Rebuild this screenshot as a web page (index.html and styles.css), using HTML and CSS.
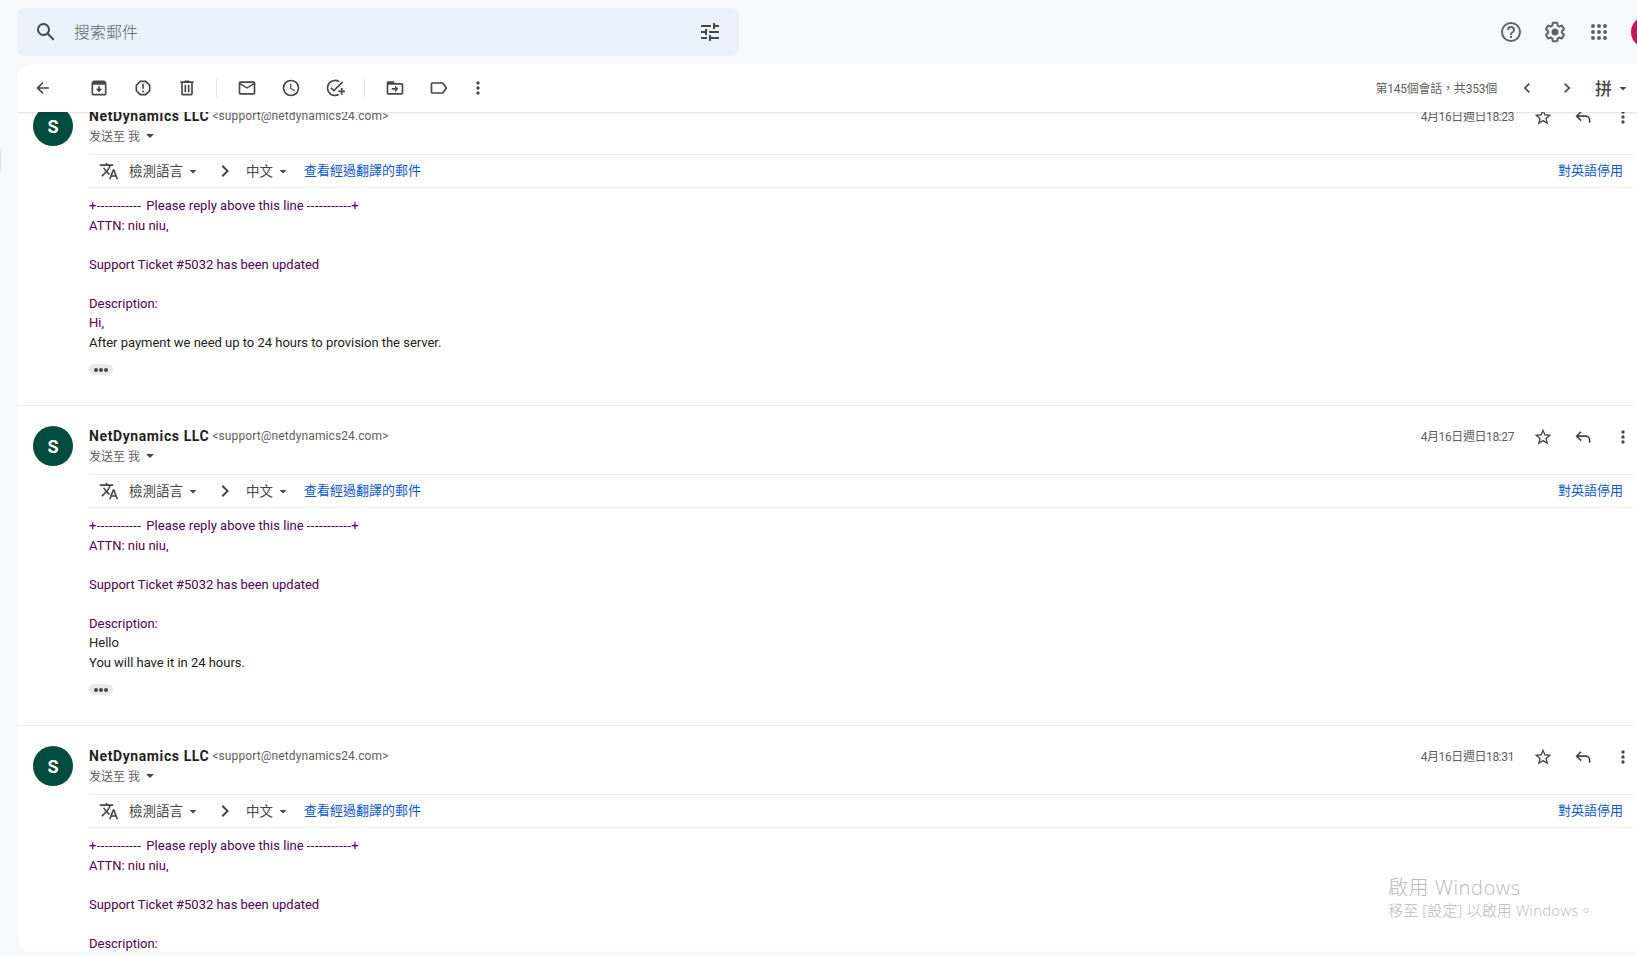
FILE: index.html
```html
<!DOCTYPE html>
<html lang="zh-Hant">

<head>
    <meta charset="UTF-8">
    <meta name="viewport" content="width=device-width, initial-scale=1.0">
    <title>NetDynamics LLC</title>
    <link rel="stylesheet" href="styles.css">
</head>

<body>
    <!-- shared icons -->
    <svg class="sprite" aria-hidden="true">
        <symbol id="search" viewBox="0 0 24 24"><path d="M20.49 19l-5.73-5.73A6.47 6.47 0 0 0 16 9.5 6.5 6.5 0 1 0 9.5 16c1.41 0 2.7-.45 3.77-1.24L19 20.49 20.49 19zM5 9.5a4.5 4.5 0 1 1 9 0 4.5 4.5 0 0 1-9 0z"/></symbol>
        <symbol id="tune" viewBox="0 0 24 24"><path d="M3 17v2h6v-2H3zM3 5v2h10V5H3zm10 16v-2h8v-2h-8v-2h-2v6h2zM7 9v2H3v2h4v2h2V9H7zm14 4v-2H11v2h10zm-6-4h2V7h4V5h-4V3h-2v6z"/></symbol>
        <symbol id="help" viewBox="0 0 24 24"><path d="M11 18h2v-2h-2v2zm1-16a10 10 0 1 0 0 20 10 10 0 0 0 0-20zm0 18a8 8 0 1 1 0-16 8 8 0 0 1 0 16zm0-14a4 4 0 0 0-4 4h2a2 2 0 1 1 4 0c0 2-3 1.750-3 5h2c0-2.250 3-2.500 3-5a4 4 0 0 0-4-4z"/></symbol>
        <symbol id="gear" viewBox="0 0 24 24"><path d="M13.850 22.250h-3.700c-.740 0-1.360-.540-1.450-1.270l-.270-1.890c-.270-.140-.530-.290-.790-.460l-1.800.720c-.700.260-1.470-.030-1.810-.650L2.200 15.530c-.350-.660-.200-1.440.360-1.880l1.530-1.190c-.010-.150-.020-.300-.020-.460 0-.150.010-.310.020-.460l-1.520-1.190c-.590-.450-.740-1.260-.370-1.880l1.850-3.190c.340-.620 1.110-.900 1.790-.630l1.810.730c.260-.170.520-.320.780-.460l.270-1.910c.090-.700.710-1.250 1.440-1.250h3.700c.740 0 1.360.540 1.450 1.270l.270 1.890c.270.140.530.290.790.460l1.800-.720c.710-.260 1.480.030 1.820.650l1.840 3.180c.360.660.200 1.440-.360 1.880l-1.520 1.190c.010.150.020.300.020.460s-.010.310-.020.460l1.520 1.190c.560.450.720 1.230.370 1.860l-1.860 3.220c-.340.620-1.110.900-1.800.630l-1.800-.720c-.260.170-.520.320-.780.460l-.270 1.910c-.100.680-.720 1.220-1.460 1.220zm-3.230-2h2.760l.370-2.550.530-.220c.440-.180.880-.440 1.340-.780l.450-.340 2.380.960 1.380-2.400-2.030-1.580.070-.560c.030-.260.060-.510.060-.780s-.030-.530-.060-.780l-.070-.560 2.030-1.580-1.390-2.400-2.390.960-.450-.350c-.420-.320-.870-.580-1.330-.770l-.520-.220-.370-2.550h-2.760l-.370 2.550-.530.210c-.440.190-.880.440-1.340.790l-.450.330-2.380-.950-1.390 2.390 2.030 1.580-.070.560a7 7 0 0 0-.060.790c0 .260.020.530.060.780l.070.560-2.030 1.580 1.380 2.400 2.390-.960.450.350c.430.330.860.580 1.330.770l.530.220.380 2.550z"/><circle cx="12" cy="12" r="3.500"/></symbol>
        <symbol id="apps" viewBox="0 0 24 24"><circle cx="6" cy="6" r="2"/><circle cx="12" cy="6" r="2"/><circle cx="18" cy="6" r="2"/><circle cx="6" cy="12" r="2"/><circle cx="12" cy="12" r="2"/><circle cx="18" cy="12" r="2"/><circle cx="6" cy="18" r="2"/><circle cx="12" cy="18" r="2"/><circle cx="18" cy="18" r="2"/></symbol>
        <symbol id="back" viewBox="0 0 24 24"><path d="M19 11H7.800l4.900-4.900L11.300 4.700 4 12l7.300 7.300 1.400-1.400L7.800 13H19v-2z"/></symbol>
        <symbol id="archive" viewBox="0 0 24 24"><path fill-rule="evenodd" d="M20.500 5.200l-1.400-1.700C18.900 3.200 18.500 3 18 3H6c-.5 0-.9.200-1.200.500L3.500 5.200C3.200 5.600 3 6 3 6.500V19a2 2 0 0 0 2 2h14a2 2 0 0 0 2-2V6.500c0-.5-.2-.9-.5-1.300zM5 19V8h14v11H5z"/><path d="M13 10h-2v3H8l4 4 4-4h-3z"/></symbol>
        <symbol id="spam" viewBox="0 0 24 24"><path fill-rule="evenodd" d="M15.700 3H8.300L3 8.300v7.400L8.300 21h7.400l5.300-5.300V8.300L15.700 3zM19 14.900L14.900 19H9.100L5 14.900V9.100L9.100 5h5.800L19 9.100v5.800z"/><path d="M11 7h2v6h-2zM11 15h2v2h-2z"/></symbol>
        <symbol id="trash" viewBox="0 0 24 24"><path fill-rule="evenodd" d="M15 4V3H9v1H4v2h1v13a2 2 0 0 0 2 2h10a2 2 0 0 0 2-2V6h1V4h-5zm2 15H7V6h10v13z"/><path d="M9 8h2v9H9zM13 8h2v9h-2z"/></symbol>
        <symbol id="mail" viewBox="0 0 24 24"><path d="M20 4H4a2 2 0 0 0-2 2v12a2 2 0 0 0 2 2h16a2 2 0 0 0 2-2V6a2 2 0 0 0-2-2zm0 14H4V8l8 5 8-5v10zm-8-7L4 6h16l-8 5z"/></symbol>
        <symbol id="clock" viewBox="0 0 24 24"><path d="M12 2a10 10 0 1 0 0 20 10 10 0 0 0 0-20zm0 18a8 8 0 1 1 0-16 8 8 0 0 1 0 16zm.500-13H11v6l5.200 3.200.800-1.300-4.500-2.700V7z"/></symbol>
        <symbol id="task" viewBox="0 0 24 24"><path d="M22 5.200L10.600 16.600l-4.200-4.200L7.800 11l2.800 2.800L20.600 3.800 22 5.200zM12 20a8 8 0 1 1 4.200-14.800l1.500-1.500A10 10 0 1 0 17.200 20.500l-1.500-1.500A8 8 0 0 1 12 20zm7-5h-3v2h3v3h2v-3h3v-2h-3v-3h-2v3z"/></symbol>
        <symbol id="move" viewBox="0 0 24 24"><path fill-rule="evenodd" d="M20 6h-8l-2-2H4a2 2 0 0 0-2 2v12a2 2 0 0 0 2 2h16a2 2 0 0 0 2-2V8a2 2 0 0 0-2-2zm0 12H4V8h16v10z"/><path d="M12 17l4-4-4-4v3H8v2h4z"/></symbol>
        <symbol id="label" viewBox="0 0 24 24"><path d="M16 5H4a2 2 0 0 0-2 2v10a2 2 0 0 0 2 2h12c.700 0 1.300-.300 1.600-.800L22 12l-4.400-6.200C17.300 5.300 16.700 5 16 5zm0 12H4V7h12l3.550 5L16 17z"/></symbol>
        <symbol id="more" viewBox="0 0 24 24"><path d="M12 8a2 2 0 1 0 0-4 2 2 0 0 0 0 4zm0 2a2 2 0 1 0 0 4 2 2 0 0 0 0-4zm0 6a2 2 0 1 0 0 4 2 2 0 0 0 0-4z"/></symbol>
        <symbol id="left" viewBox="0 0 24 24"><path d="M15.400 7.400L14 6l-6 6 6 6 1.400-1.400-4.600-4.600z"/></symbol>
        <symbol id="right" viewBox="0 0 24 24"><path d="M10 6L8.600 7.400l4.600 4.600-4.600 4.600L10 18l6-6z"/></symbol>
        <symbol id="star" viewBox="0 0 24 24"><path d="M22 9.240l-7.190-.62L12 2 9.190 8.630 2 9.240l5.460 4.730L5.820 21 12 17.270 18.180 21l-1.630-7.030L22 9.240zM12 15.400l-3.760 2.270 1-4.280-3.320-2.880 4.380-.380L12 6.100l1.710 4.040 4.380.380-3.320 2.880 1 4.280L12 15.400z"/></symbol>
        <symbol id="reply" viewBox="0 0 24 24"><path d="M6.800 10l3.600-3.600L9 5l-6 6 6 6 1.400-1.400L6.800 12H15a4 4 0 0 1 4 4v3h2v-3a6 6 0 0 0-6-6z"/></symbol>
        <symbol id="translate" viewBox="0 0 24 24"><path d="M12.870 15.070l-2.540-2.510.030-.030A17.520 17.520 0 0 0 14.070 6H17V4h-7V2H8v2H1v2h11.170C11.500 7.920 10.440 9.750 9 11.350 8.070 10.320 7.300 9.190 6.690 8h-2c.730 1.630 1.730 3.170 2.980 4.560l-5.090 5.020L4 19l5-5 3.110 3.110.760-2.040zM18.500 10h-2L12 22h2l1.120-3h4.750L21 22h2l-4.500-12zm-2.620 7l1.620-4.330L19.120 17h-3.240z"/></symbol>
    </svg>

    <div class="nav-edge"></div>

    <header class="topbar">
        <div class="search">
            <svg class="icon-24"><use href="#search"/></svg>
            <span class="search-text">搜索郵件</span>
            <svg class="icon-24"><use href="#tune"/></svg>
        </div>
        <div class="top-actions">
            <svg class="icon-24"><use href="#help"/></svg>
            <svg class="icon-24"><use href="#gear"/></svg>
            <svg class="icon-24"><use href="#apps"/></svg>
            <div class="account"></div>
        </div>
    </header>

    <main class="panel">
        <div class="toolbar">
            <svg class="icon back"><use href="#back"/></svg>
            <div class="tools">
                <svg class="icon"><use href="#archive"/></svg>
                <svg class="icon"><use href="#spam"/></svg>
                <svg class="icon"><use href="#trash"/></svg>
            </div>
            <div class="tools">
                <svg class="icon"><use href="#mail"/></svg>
                <svg class="icon"><use href="#clock"/></svg>
                <svg class="icon"><use href="#task"/></svg>
            </div>
            <div class="tools">
                <svg class="icon"><use href="#move"/></svg>
                <svg class="icon"><use href="#label"/></svg>
            </div>
            <svg class="icon"><use href="#more"/></svg>
            <div class="pager">
                <span class="count">第145個會話，共353個</span>
                <svg class="icon"><use href="#left"/></svg>
                <svg class="icon"><use href="#right"/></svg>
            </div>
            <div class="ime"><span>拼</span><i class="caret"></i></div>
        </div>

        <div class="thread">
            <article class="message">
                <div class="avatar">S</div>
                <div class="content">
                    <div class="head">
                        <div class="from">
                            <div class="sender"><b>NetDynamics LLC</b><span>&lt;support@netdynamics24.com&gt;</span></div>
                            <div class="to" lang="zh-Hans">发送至 我<i class="caret"></i></div>
                        </div>
                        <div class="meta">
                            <span class="date">4月16日週日18:23</span>
                            <svg class="icon"><use href="#star"/></svg>
                            <svg class="icon"><use href="#reply"/></svg>
                            <svg class="icon"><use href="#more"/></svg>
                        </div>
                    </div>
                    <div class="translate">
                        <svg class="icon"><use href="#translate"/></svg>
                        <span class="lang">檢測語言</span><i class="caret"></i>
                        <svg class="icon-24 arrow"><use href="#right"/></svg>
                        <span class="lang">中文</span><i class="caret"></i>
                        <a class="view">查看經過翻譯的郵件</a>
                        <a class="off">對英語停用</a>
                    </div>
                    <div class="body">
                        <div class="quoted">
                            <span class="rule">+-----------</span><span class="reply-line">Please reply above this line</span><span class="rule">-----------+</span><br>
                            ATTN: niu niu,<br><br>
                            Support Ticket #5032 has been updated<br><br>
                            Description:<br>
                            Hi,
                        </div>
                        After payment we need up to 24 hours to provision the server.
                    </div>
                    <div class="trimmed"><i></i><i></i><i></i></div>
                </div>
            </article>

            <article class="message">
                <div class="avatar">S</div>
                <div class="content">
                    <div class="head">
                        <div class="from">
                            <div class="sender"><b>NetDynamics LLC</b><span>&lt;support@netdynamics24.com&gt;</span></div>
                            <div class="to" lang="zh-Hans">发送至 我<i class="caret"></i></div>
                        </div>
                        <div class="meta">
                            <span class="date">4月16日週日18:27</span>
                            <svg class="icon"><use href="#star"/></svg>
                            <svg class="icon"><use href="#reply"/></svg>
                            <svg class="icon"><use href="#more"/></svg>
                        </div>
                    </div>
                    <div class="translate">
                        <svg class="icon"><use href="#translate"/></svg>
                        <span class="lang">檢測語言</span><i class="caret"></i>
                        <svg class="icon-24 arrow"><use href="#right"/></svg>
                        <span class="lang">中文</span><i class="caret"></i>
                        <a class="view">查看經過翻譯的郵件</a>
                        <a class="off">對英語停用</a>
                    </div>
                    <div class="body">
                        <div class="quoted">
                            <span class="rule">+-----------</span><span class="reply-line">Please reply above this line</span><span class="rule">-----------+</span><br>
                            ATTN: niu niu,<br><br>
                            Support Ticket #5032 has been updated<br><br>
                            Description:
                        </div>
                        Hello<br>
                        You will have it in 24 hours.
                    </div>
                    <div class="trimmed"><i></i><i></i><i></i></div>
                </div>
            </article>

            <article class="message">
                <div class="avatar">S</div>
                <div class="content">
                    <div class="head">
                        <div class="from">
                            <div class="sender"><b>NetDynamics LLC</b><span>&lt;support@netdynamics24.com&gt;</span></div>
                            <div class="to" lang="zh-Hans">发送至 我<i class="caret"></i></div>
                        </div>
                        <div class="meta">
                            <span class="date">4月16日週日18:31</span>
                            <svg class="icon"><use href="#star"/></svg>
                            <svg class="icon"><use href="#reply"/></svg>
                            <svg class="icon"><use href="#more"/></svg>
                        </div>
                    </div>
                    <div class="translate">
                        <svg class="icon"><use href="#translate"/></svg>
                        <span class="lang">檢測語言</span><i class="caret"></i>
                        <svg class="icon-24 arrow"><use href="#right"/></svg>
                        <span class="lang">中文</span><i class="caret"></i>
                        <a class="view">查看經過翻譯的郵件</a>
                        <a class="off">對英語停用</a>
                    </div>
                    <div class="body">
                        <div class="quoted">
                            <span class="rule">+-----------</span><span class="reply-line">Please reply above this line</span><span class="rule">-----------+</span><br>
                            ATTN: niu niu,<br><br>
                            Support Ticket #5032 has been updated<br><br>
                            Description:
                        </div>
                    </div>
                </div>
            </article>
        </div>
    </main>

    <div class="activate">
        <div class="activate-title">啟用 Windows</div>
        <div class="activate-text">移至 [設定] 以啟用 Windows。</div>
    </div>
</body>
</html>
```

FILE: styles.css
```css
* {
    box-sizing: border-box;
}

body {
    margin: 0;
    height: 956px;
    overflow: hidden;
    background-color: #f6f8fc;
    color: #222;
    font-family: Roboto, "Noto Sans CJK TC", sans-serif;
    font-size: 13px;
}

svg {
    display: block;
    flex: none;
    fill: #444746;
}

.sprite {
    position: absolute;
    width: 0;
    height: 0;
}

.icon {
    width: 20px;
    height: 20px;
}

.icon-24 {
    width: 24px;
    height: 24px;
}

.caret {
    flex: none;
    width: 8px;
    height: 4px;
    margin-top: 1px;
    background-color: #444746;
    clip-path: polygon(0 0, 100% 0, 50% 100%);
}

/* edge of the collapsed side menu */
.nav-edge {
    position: absolute;
    left: -15px;
    top: 144px;
    width: 16px;
    height: 32px;
    border-radius: 16px;
    background-color: #d3e3fd;
}

.topbar {
    display: flex;
    justify-content: space-between;
    height: 64px;
    padding: 8px 0 8px 17px;
}

.search {
    display: flex;
    align-items: center;
    width: 722px;
    height: 48px;
    padding: 0 17px;
    border-radius: 8px;
    background-color: #eaf1fb;
}

.search-text {
    flex: 1;
    padding: 0 0 2px 16px;
    color: #5f6368;
    font-size: 16px;
    font-weight: 300;
}

.top-actions {
    display: flex;
    align-items: center;
    gap: 20px;
    width: 138px;
}

.top-actions svg {
    fill: #5f6368;
}

.account {
    flex: none;
    width: 32px;
    height: 32px;
    border-radius: 50%;
    background-color: #c2185b;
}

.panel {
    height: 888px;
    margin-left: 17px;
    overflow: hidden;
    border-radius: 16px 0 0 16px;
    background-color: #fff;
}

.toolbar {
    position: relative;
    z-index: 1;
    display: flex;
    align-items: center;
    height: 48px;
    padding: 0 10px 0 16px;
    background-color: #fff;
    box-shadow: 0 1px 2px rgba(0, 0, 0, 0.15);
}

.back {
    margin-right: 16px;
}

.tools {
    display: flex;
    gap: 24px;
    height: 20px;
    padding: 0 19px 0 20px;
}

.tools + .tools {
    border-left: 1px solid #e4e6e8;
}

.pager {
    display: flex;
    align-items: center;
    gap: 20px;
    margin-left: auto;
}

.count {
    padding-bottom: 2px;
    color: #5e5e5e;
    font-size: 12px;
    letter-spacing: -0.22px;
}

.ime {
    display: flex;
    align-items: center;
    gap: 7px;
    margin-left: 18px;
    color: #444746;
    font-size: 17px;
    font-weight: 500;
}

.ime span {
    padding-bottom: 2px;
}

/* the thread is scrolled a little under the toolbar */
.thread {
    margin-top: -27px;
    padding-right: 4px;
}

.message {
    display: flex;
    gap: 16px;
    height: 320px;
    padding: 20px 0 0 16px;
    border-top: 1px solid #eceff1;
}

.avatar {
    flex: none;
    width: 40px;
    height: 40px;
    border-radius: 50%;
    background-color: #004d40;
    color: #fff;
    font-size: 18px;
    font-weight: 700;
    line-height: 41px;
    text-align: center;
}

.content {
    flex: 1;
}

.head {
    display: flex;
    justify-content: space-between;
    height: 48px;
}

.sender,
.to {
    display: flex;
    align-items: center;
    height: 20px;
}

.sender b {
    color: #1f1f1f;
    font-size: 14px;
    letter-spacing: 0.6px;
}

.sender span {
    margin-left: 3px;
    color: #5e5e5e;
    font-size: 12px;
    letter-spacing: 0.11px;
}

.to {
    gap: 6px;
    height: 19px;
    color: #5e5e5e;
    font-family: Roboto, "Noto Sans CJK SC", sans-serif;
    font-size: 12px;
}

.meta {
    display: flex;
    align-items: center;
    gap: 20px;
    height: 22px;
}

.date {
    margin-right: -1px;
    padding-bottom: 4px;
    color: #5e5e5e;
    font-size: 12px;
    letter-spacing: -0.4px;
}

.translate {
    display: flex;
    align-items: center;
    height: 34px;
    padding: 0 10px;
    border-top: 1px solid #eceff1;
    border-bottom: 1px solid #eceff1;
    color: #444746;
}

.lang {
    margin-right: 6px;
    padding-bottom: 2px;
    font-size: 13.5px;
}

.translate .icon {
    margin-right: 10px;
}

.arrow {
    margin: 0 9px 0 16px;
}

.translate a {
    padding-bottom: 4px;
    color: #0b57d0;
    font-size: 13px;
}

.view {
    margin-left: 17px;
}

.off {
    margin-left: auto;
}

.body {
    margin-top: 8px;
    line-height: 19.5px;
    letter-spacing: -0.02px;
}

.quoted {
    color: #500050;
}

.rule {
    letter-spacing: 0.45px;
}

.reply-line {
    margin: 0 3px 0 5px;
    letter-spacing: 0.05px;
}

.trimmed {
    display: flex;
    align-items: center;
    justify-content: center;
    gap: 1px;
    width: 24px;
    height: 11px;
    margin-top: 12px;
    border-radius: 6px;
    background-color: #e8eaed;
}

.trimmed i {
    width: 4px;
    height: 4px;
    border-radius: 50%;
    background-color: #444746;
}

/* desktop watermark over the window */
.activate {
    position: absolute;
    left: 1388px;
    top: 874px;
    color: #b9b9b9;
    font-family: "Open Sans", "Noto Sans CJK TC", sans-serif;
    font-weight: 300;
    white-space: nowrap;
}

.activate-title {
    font-size: 20px;
    line-height: 27px;
    letter-spacing: 0.6px;
}

.activate-text {
    font-size: 15px;
    line-height: 18px;
    letter-spacing: 0.15px;
}
```
